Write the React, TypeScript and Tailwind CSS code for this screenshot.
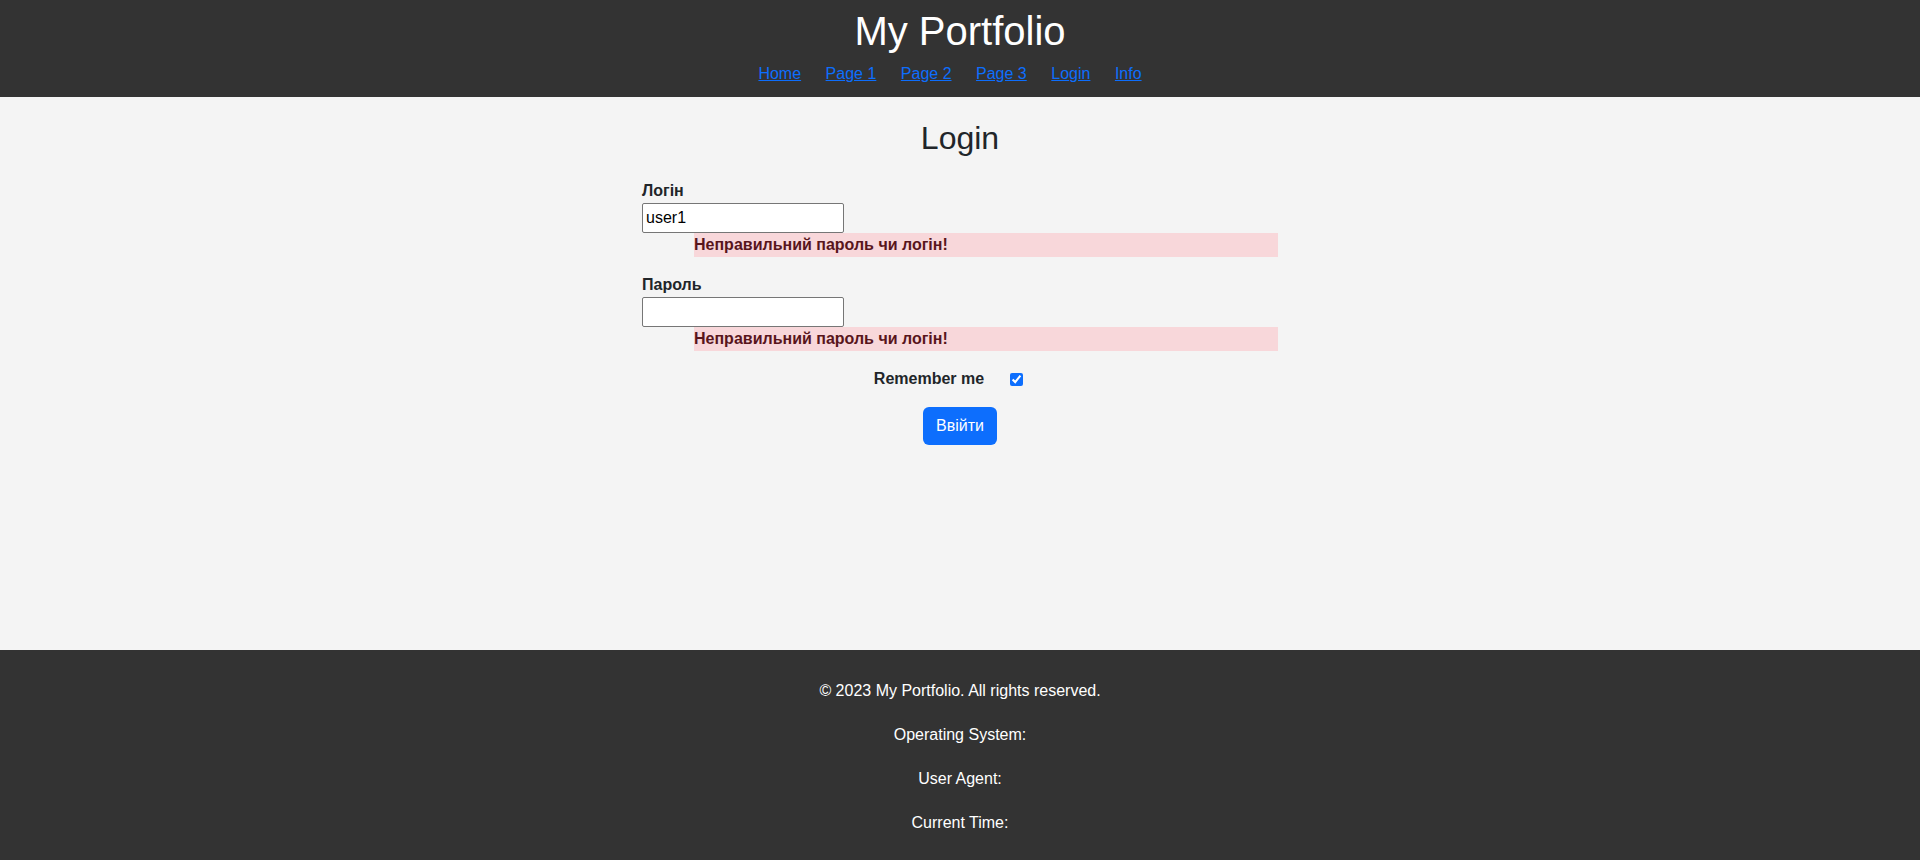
import { useState } from "react";

const NAV_LINKS = ["Home", "Page 1", "Page 2", "Page 3", "Login", "Info"];

const FOOTER_LINES = [
  "© 2023 My Portfolio. All rights reserved.",
  "Operating System:",
  "User Agent:",
  "Current Time:",
];

function FieldError() {
  return (
    <div className="ml-[52px] h-[24px] bg-[#f8d7da] text-[16px] leading-[24px] font-bold text-[#58151c]">
      Неправильний пароль чи логін!
    </div>
  );
}

export default function App() {
  const [login, setLogin] = useState("user1");
  const [password, setPassword] = useState("");
  const [remember, setRemember] = useState(true);

  return (
    <div className="flex min-h-screen flex-col bg-[#f4f4f4] font-['Liberation_Sans',Arial,sans-serif] text-[#212529]">
      {/* Header */}
      <header className="flex flex-col items-center bg-[#333333] pt-[8px] pb-[14px] text-white">
        <h1 className="text-[40px] leading-[46px] font-normal">My Portfolio</h1>
        <nav className="mt-[11px] flex gap-[24.5px] pr-[20px] text-[16px] leading-[18px]">
          {NAV_LINKS.map((link) => (
            <a key={link} href="#" className="text-[#0d6efd] underline">
              {link}
            </a>
          ))}
        </nav>
      </header>

      {/* Login form */}
      <main className="flex-1">
        <h2 className="mt-[22px] mb-[22px] text-center text-[32px] leading-[38px] font-normal text-[#212529]">
          Login
        </h2>
        <form className="mx-auto flex w-[636px] flex-col" onSubmit={(e) => e.preventDefault()}>
          <label className="text-[16px] leading-[24px] font-bold">Логін</label>
          <input
            type="text"
            value={login}
            onChange={(e) => setLogin(e.target.value)}
            className="h-[30px] w-[202px] rounded-[2px] border border-[#767676] bg-white px-[3px] text-[16px] text-black outline-none"
          />
          <FieldError />

          <label className="mt-[16px] text-[16px] leading-[24px] font-bold">Пароль</label>
          <input
            type="password"
            value={password}
            onChange={(e) => setPassword(e.target.value)}
            className="h-[30px] w-[202px] rounded-[2px] border border-[#767676] bg-white px-[3px] text-[16px] text-black outline-none"
          />
          <FieldError />

          <div className="mt-[16px] flex h-[24px] items-center justify-center">
            <span className="mr-[26px] text-[16px] leading-[24px] font-bold">Remember me</span>
            <input
              type="checkbox"
              checked={remember}
              onChange={(e) => setRemember(e.target.checked)}
              className="m-0 mr-[23px] h-[13px] w-[13px] accent-[#0d6efd]"
            />
          </div>

          <div className="mt-[16px] flex justify-center">
            <button
              type="submit"
              className="h-[38px] rounded-[6px] bg-[#0d6efd] px-[13px] text-[16px] leading-[24px] text-white"
            >
              Ввійти
            </button>
          </div>
        </form>
      </main>

      {/* Footer */}
      <footer className="flex flex-col items-center gap-[16px] bg-[#333333] pt-[27px] pb-[23px] text-[16px] leading-[28px] text-white">
        {FOOTER_LINES.map((line) => (
          <p key={line}>{line}</p>
        ))}
      </footer>
    </div>
  );
}
